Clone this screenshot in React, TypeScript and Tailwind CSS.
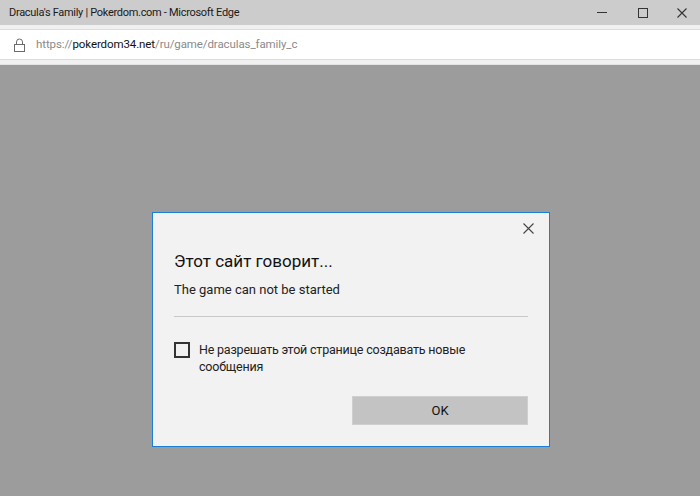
import React from 'react';

const font = { fontFamily: 'Roboto, "Noto Sans", sans-serif' };

function LockIcon() {
  return (
    <svg width="11" height="14" viewBox="0 0 11 14" fill="none" stroke="#6b6b6b" strokeWidth="1">
      <path d="M2.5 6.5V4a3 3 0 0 1 6 0v2.5" />
      <rect x="0.5" y="6.5" width="10" height="7" />
    </svg>
  );
}

function TitleBar() {
  return (
    <div className="h-[25px] bg-[#cccccc] flex items-center justify-between pl-[9px] shrink-0">
      <span className="text-[11px] tracking-[-0.3px] text-[#1a1a1a] leading-none">
        Dracula's Family | Pokerdom.com - Microsoft Edge
      </span>
      <div className="flex items-center h-full">
        <div className="w-[40px] h-full flex items-center justify-center">
          <div className="w-[10px] h-[1.5px] bg-[#333]" />
        </div>
        <div className="w-[42px] h-full flex items-center justify-center">
          <div className="w-[10px] h-[10px] border-[1.5px] border-[#333]" />
        </div>
        <div className="w-[36px] h-full flex items-center justify-center">
          <svg width="10" height="10" viewBox="0 0 10 10" stroke="#333" strokeWidth="1.1">
            <path d="M0.5 0.5l9 9M9.5 0.5l-9 9" />
          </svg>
        </div>
      </div>
    </div>
  );
}

function AddressBar() {
  return (
    <div className="h-[40px] bg-[#f0f0f0] py-[4px] shrink-0 border-b border-[#e3e3e3]">
      <div className="h-full bg-white border-y border-[#dcdcdc] flex items-center pl-[14px]">
        <LockIcon />
        <span className="ml-[11px] text-[11.5px] tracking-[-0.1px] text-[#8a8a8a]">
          https://<span className="text-[#111]">pokerdom34.net</span>/ru/game/draculas_family_c
        </span>
      </div>
    </div>
  );
}

function Dialog() {
  return (
    <div className="w-[398px] h-[235px] bg-[#f2f2f2] border border-[#1a7fd4] flex flex-col px-[21px]">
      <div className="flex justify-end pt-[10px] mr-[-6px]">
        <svg width="11" height="11" viewBox="0 0 11 11" stroke="#444" strokeWidth="1.1">
          <path d="M0.5 0.5l10 10M10.5 0.5l-10 10" />
        </svg>
      </div>
      <div className="text-[17px] text-[#111] mt-[15px] leading-[24px]">Этот сайт говорит...</div>
      <div className="text-[13px] text-[#222] mt-[8px] leading-[18px]">The game can not be started</div>
      <div className="h-px bg-[#c8c8c8] mt-[17px]" />
      <div className="flex items-start mt-[24px]">
        <div className="w-[16px] h-[16px] border-2 border-[#333] shrink-0 mt-[1px]" />
        <div className="ml-[9px] text-[12.5px] tracking-[-0.2px] text-[#222] leading-[17px]">
          Не разрешать этой странице создавать новые
          <br />
          сообщения
        </div>
      </div>
      <div className="flex justify-end mt-[21px]">
        <div className="w-[176px] h-[29px] bg-[#c3c3c3] border border-[#cfcfcf] flex items-center justify-center text-[13px] text-[#111]">
          OK
        </div>
      </div>
    </div>
  );
}

export default function App() {
  return (
    <div className="w-[700px] h-[496px] flex flex-col overflow-hidden" style={font}>
      <TitleBar />
      <AddressBar />
      <div className="flex-1 bg-[#9c9c9c] flex items-start justify-start pl-[152px] pt-[147px]">
        <Dialog />
      </div>
    </div>
  );
}
